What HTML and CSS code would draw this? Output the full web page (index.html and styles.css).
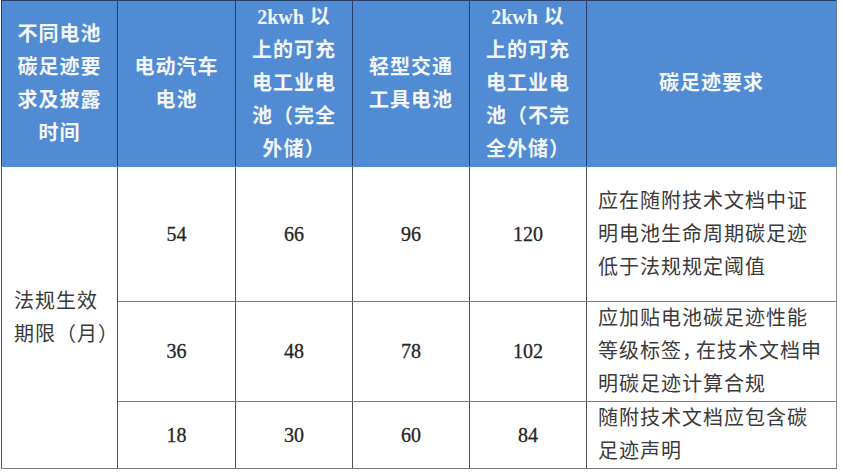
FILE: index.html
```html
<!DOCTYPE html>
<html lang="zh">
<head>
<meta charset="utf-8">
<link rel="stylesheet" href="styles.css">
</head>
<body>
<table class="grid">
  <colgroup>
    <col class="c1"><col class="c2"><col class="c3"><col class="c4"><col class="c5"><col class="c6">
  </colgroup>
  <thead>
    <tr class="head-row">
      <th>不同电池<br>碳足迹要<br>求及披露<br>时间</th>
      <th>电动汽车<br>电池</th>
      <th><span class="latin">2kwh</span> 以<br>上的可充<br>电工业电<br>池（完全<br>外储）</th>
      <th>轻型交通<br>工具电池</th>
      <th><span class="latin">2kwh</span> 以<br>上的可充<br>电工业电<br>池（不完<br>全外储）</th>
      <th class="last">碳足迹要求</th>
    </tr>
  </thead>
  <tbody>
    <tr class="row-a">
      <td class="label" rowspan="3">法规生效<br>期限（月）</td>
      <td class="num">54</td>
      <td class="num">66</td>
      <td class="num">96</td>
      <td class="num">120</td>
      <td class="req">应在随附技术文档中证<br>明电池生命周期碳足迹<br>低于法规规定阈值</td>
    </tr>
    <tr class="row-b">
      <td class="num">36</td>
      <td class="num">48</td>
      <td class="num">78</td>
      <td class="num">102</td>
      <td class="req">应加贴电池碳足迹性能<br>等级标签<span class="punc">，</span>在技术文档申<br>明碳足迹计算合规</td>
    </tr>
    <tr class="row-c">
      <td class="num">18</td>
      <td class="num">30</td>
      <td class="num">60</td>
      <td class="num">84</td>
      <td class="req">随附技术文档应包含碳<br>足迹声明</td>
    </tr>
  </tbody>
</table>
</body>
</html>
```

FILE: styles.css
```css
html, body {
  margin: 0;
  padding: 0;
  background: #ffffff;
}

body {
  padding: 0 0 0 1px;
  font-family: "Liberation Serif", "Noto Sans CJK SC", serif;
  font-size: 20px;
  letter-spacing: 1px;
  color: #333333;
}

.grid {
  border-collapse: collapse;
  table-layout: fixed;
  width: 835px;
}

.c1 { width: 116px; }
.c2 { width: 118px; }
.c3 { width: 117px; }
.c4 { width: 117px; }
.c5 { width: 117px; }
.c6 { width: 250px; }

.grid th,
.grid td {
  border: 1px solid #4e4e4e;
  border-top-color: #7c7c7c;
  border-bottom-color: #7c7c7c;
  padding: 0;
  line-height: 33px;
  vertical-align: middle;
  white-space: nowrap;
}

.grid td.req {
  border-right-color: #8a8a8a;
}

.grid th {
  background: #508bd3;
  color: #f3f6fb;
  font-weight: 700;
  text-align: center;
  border-color: #27406a;
  border-bottom-color: #508bd3;
}

.grid th.last {
  border-right-color: #5f7fa8;
}

.head-row { height: 166px; }
.row-a { height: 135px; }
.row-b { height: 99px; }
.row-c { height: 66px; }

.grid thead + tbody tr:first-child td {
  border-top-color: #508bd3;
}

.latin {
  font-family: "Liberation Serif", serif;
  font-weight: 700;
  letter-spacing: 0;
}

.num {
  text-align: center;
  color: #262626;
  letter-spacing: 0;
  -webkit-text-stroke: 0.3px #262626;
}

.label {
  text-align: left;
  padding-left: 12px !important;
  color: #3a3a3a;
}

.req {
  text-align: left;
  padding-left: 11px !important;
  color: #3a3a3a;
}

.punc {
  letter-spacing: -6px;
}
```
